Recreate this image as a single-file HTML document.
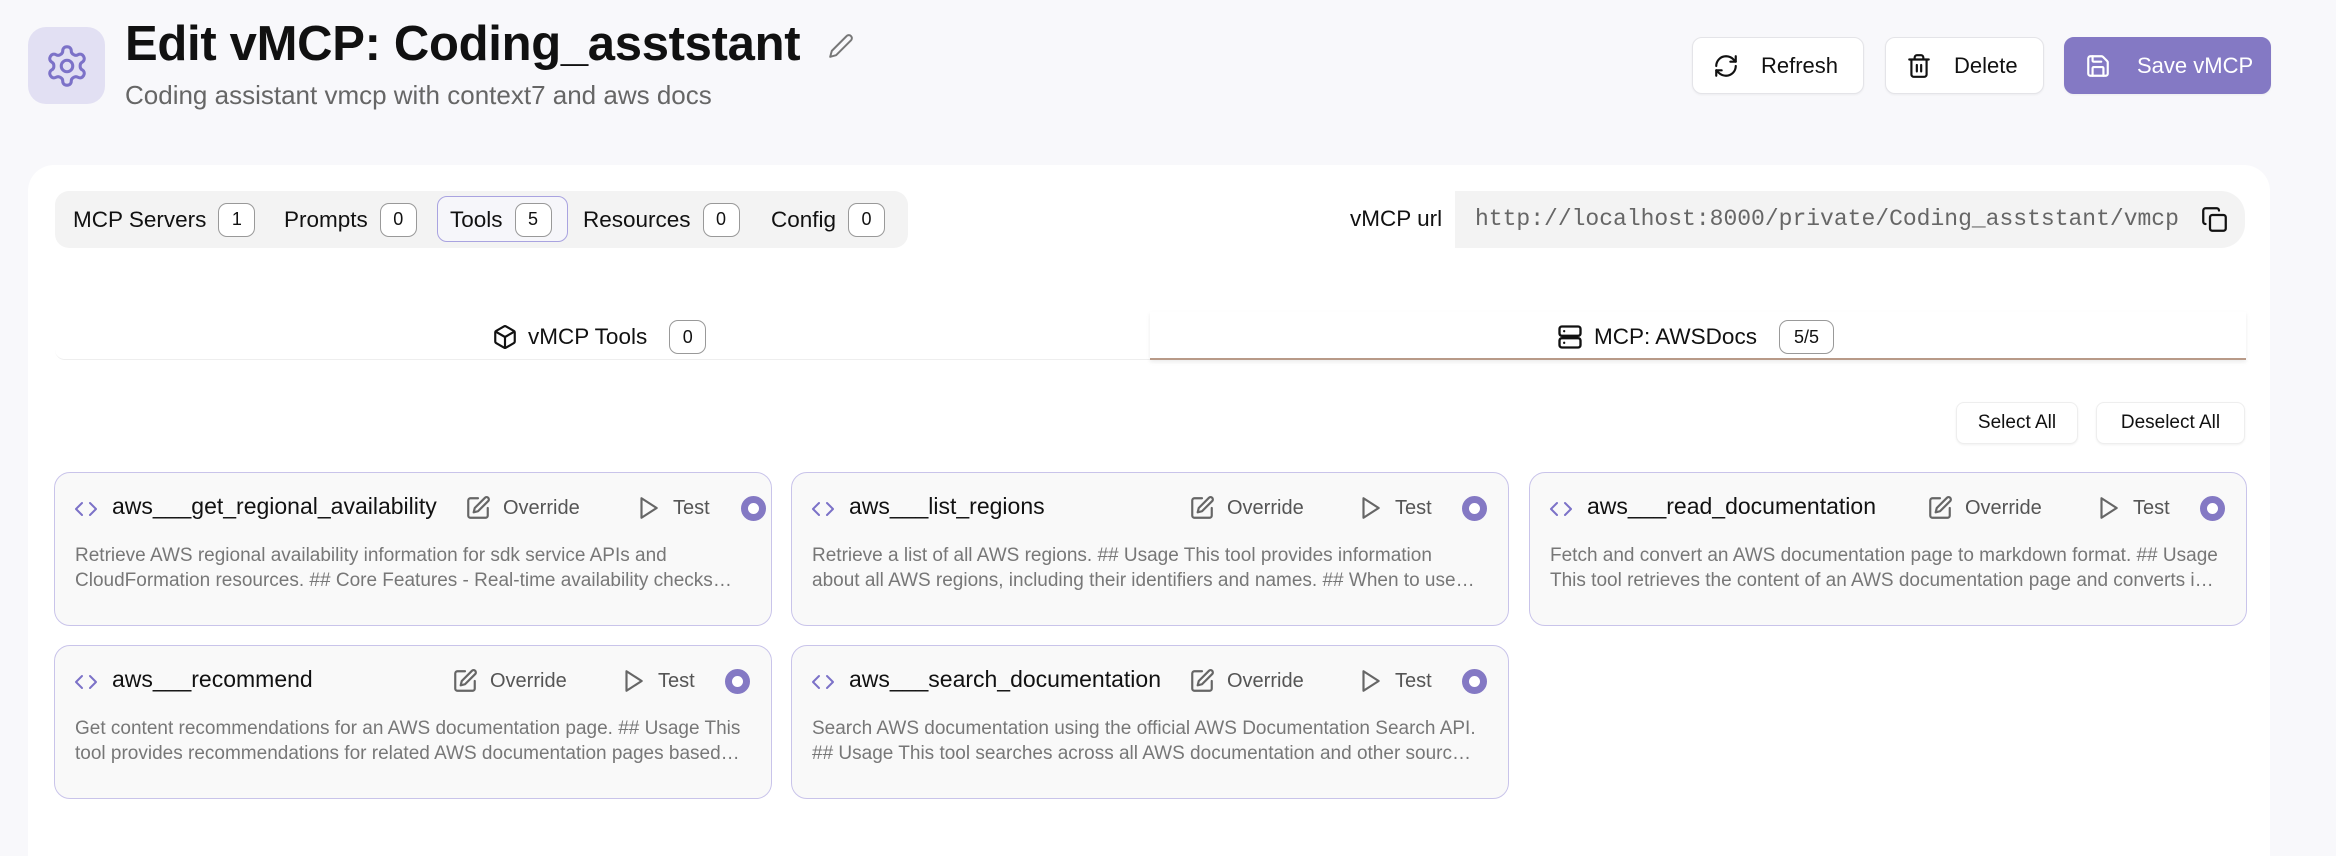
<!DOCTYPE html>
<html><head><meta charset="utf-8">
<style>
*{box-sizing:border-box;margin:0;padding:0}
html,body{width:2336px;height:856px;overflow:hidden}
body{background:#f8f8fb;font-family:"Liberation Sans",sans-serif;color:#111;position:relative}
.abs{position:absolute}
.logo{left:28px;top:27px;width:77px;height:77px;border-radius:18px;background:#e2e0f3;display:flex;align-items:center;justify-content:center}
h1{position:absolute;left:125px;top:16px;font-size:49px;font-weight:bold;letter-spacing:-0.3px}
.sub{left:125px;top:80px;font-size:26px;color:#666}
.btn{position:absolute;top:37px;height:57px;border:1px solid #e4e4e8;border-radius:10px;background:#fff;display:flex;align-items:center;gap:22px;padding-left:20px;font-size:22px;box-shadow:0 1px 2px rgba(0,0,0,.05)}
.main{left:28px;top:165px;width:2242px;height:720px;background:#fff;border-radius:26px}
.tabs{left:55px;top:191px;width:853px;height:57px;background:#f3f3f3;border-radius:14px}
.ti{position:absolute;top:0;height:57px;display:flex;align-items:center;font-size:22.5px}
.bd{display:inline-flex;align-items:center;justify-content:center;height:34px;min-width:37px;padding:0 8px;border:1px solid #999;border-radius:9px;font-size:18px;margin-left:12px;background:#fff}
.url{left:1455px;top:191px;width:790px;height:57px;background:#f3f3f3;border-radius:0 24px 24px 0;font-family:"Liberation Mono",monospace;font-size:23px;color:#666;padding-left:20px;line-height:57px}
.card{position:absolute;width:718px;height:154px;background:#f9f9f9;border:1.5px solid #c9c4ea;border-radius:16px}
.card .nm{position:absolute;left:57px;top:20px;font-size:23px;color:#111}
.card .ci{position:absolute;left:19px;top:24px}
.card .ov,.card .ts{position:absolute;top:22px;display:flex;align-items:center;gap:12px;font-size:20px;color:#555}
.card .rd{position:absolute;top:23px;width:25px;height:25px;border-radius:50%;border:7px solid #8479c4;background:#fff}
.card .ds{position:absolute;left:20px;top:70px;width:668px;font-size:19px;line-height:25px;color:#777;display:-webkit-box;-webkit-line-clamp:2;-webkit-box-orient:vertical;overflow:hidden}
.sb{position:absolute;top:402px;height:42px;background:#fff;border:1px solid #eee;border-radius:8px;font-size:19px;display:flex;align-items:center;justify-content:center;box-shadow:0 1px 2px rgba(0,0,0,.06)}
</style></head><body>
<div class="abs logo"><svg width="46" height="46" viewBox="0 0 24 24" fill="none" stroke="#7c72c8" stroke-width="1.6" stroke-linecap="round" stroke-linejoin="round"><path d="M12.22 2h-.44a2 2 0 0 0-2 2v.18a2 2 0 0 1-1 1.73l-.43.25a2 2 0 0 1-2 0l-.15-.08a2 2 0 0 0-2.730.73l-.22.38a2 2 0 0 0 .73 2.730l.15.1a2 2 0 0 1 1 1.72v.51a2 2 0 0 1-1 1.74l-.15.09a2 2 0 0 0-.73 2.73l.22.38a2 2 0 0 0 2.73.73l.15-.08a2 2 0 0 1 2 0l.43.25a2 2 0 0 1 1 1.73V20a2 2 0 0 0 2 2h.44a2 2 0 0 0 2-2v-.18a2 2 0 0 1 1-1.73l.43-.25a2 2 0 0 1 2 0l.15.08a2 2 0 0 0 2.73-.73l.22-.39a2 2 0 0 0-.73-2.73l-.15-.08a2 2 0 0 1-1-1.74v-.5a2 2 0 0 1 1-1.74l.15-.09a2 2 0 0 0 .73-2.73l-.22-.38a2 2 0 0 0-2.73-.73l-.15.08a2 2 0 0 1-2 0l-.43-.25a2 2 0 0 1-1-1.73V4a2 2 0 0 0-2-2z"/><circle cx="12" cy="12" r="3"/></svg></div>
<h1>Edit vMCP: Coding_asststant</h1>
<svg class="abs" style="left:828px;top:33px" width="26" height="26" viewBox="0 0 24 24" fill="none" stroke="#777" stroke-width="1.8" stroke-linecap="round" stroke-linejoin="round"><path d="M17 3a2.85 2.83 0 1 1 4 4L7.5 20.5 2 22l1.5-5.5Z"/></svg>
<div class="abs sub">Coding assistant vmcp with context7 and aws docs</div>

<div class="btn" style="left:1692px;width:172px"><svg width="26" height="26" viewBox="0 0 24 24" fill="none" stroke="#111" stroke-width="2" stroke-linecap="round" stroke-linejoin="round"><path d="M3 12a9 9 0 0 1 9-9 9.75 9.75 0 0 1 6.74 2.74L21 8"/><path d="M21 3v5h-5"/><path d="M21 12a9 9 0 0 1-9 9 9.75 9.75 0 0 1-6.74-2.74L3 16"/><path d="M8 16H3v5"/></svg>Refresh</div>
<div class="btn" style="left:1885px;width:159px"><svg width="26" height="26" viewBox="0 0 24 24" fill="none" stroke="#111" stroke-width="2" stroke-linecap="round" stroke-linejoin="round"><path d="M3 6h18M19 6v14c0 1-1 2-2 2H7c-1 0-2-1-2-2V6M8 6V4c0-1 1-2 2-2h4c1 0 2 1 2 2v2M10 11v6M14 11v6"/></svg>Delete</div>
<div class="btn" style="left:2064px;width:207px;background:#8479c4;border-color:#8479c4;color:#fff;gap:26px"><svg width="26" height="26" viewBox="0 0 24 24" fill="none" stroke="#fff" stroke-width="2" stroke-linecap="round" stroke-linejoin="round"><path d="M15.2 3a2 2 0 0 1 1.4.6l3.8 3.8a2 2 0 0 1 .6 1.4V19a2 2 0 0 1-2 2H5a2 2 0 0 1-2-2V5a2 2 0 0 1 2-2z"/><path d="M17 21v-7a1 1 0 0 0-1-1H8a1 1 0 0 0-1 1v7"/><path d="M7 3v4a1 1 0 0 0 1 1h7"/></svg>Save vMCP</div>

<div class="abs main"></div>
<div class="abs tabs">
<div class="ti" style="left:18px">MCP Servers<span class="bd">1</span></div>
<div class="ti" style="left:229px">Prompts<span class="bd">0</span></div>
<div class="abs" style="left:382px;top:5px;width:131px;height:46px;border:1.5px solid #a9a3e0;border-radius:10px;background:#f6f6fa"></div>
<div class="ti" style="left:395px">Tools<span class="bd">5</span></div>
<div class="ti" style="left:528px">Resources<span class="bd">0</span></div>
<div class="ti" style="left:716px">Config<span class="bd">0</span></div>
</div>
<div class="abs" style="left:1350px;top:206px;font-size:22.5px">vMCP url</div>
<div class="abs url">http://localhost:8000/private/Coding_asststant/vmcp</div>
<svg class="abs" style="left:2201px;top:206px" width="27" height="27" viewBox="0 0 24 24" fill="none" stroke="#111" stroke-width="2" stroke-linecap="round" stroke-linejoin="round"><rect x="8" y="8" width="14" height="14" rx="2"/><path d="M4 16c-1.1 0-2-.9-2-2V4c0-1.1.9-2 2-2h10c1.1 0 2 .9 2 2"/></svg>

<div class="abs" style="left:55px;top:312px;width:1095px;height:48px;border-bottom:1.5px solid #eee;border-radius:0 0 0 10px"></div>
<div class="abs" style="left:1150px;top:312px;width:1096px;height:48px;background:#fff;box-shadow:0 2px 4px rgba(0,0,0,.08);border-bottom:2px solid #b89a88"></div>
<div class="abs" style="left:492px;top:320px;display:flex;align-items:center;font-size:22.5px;height:34px"><svg width="26" height="26" viewBox="0 0 24 24" fill="none" stroke="#111" stroke-width="2" stroke-linecap="round" stroke-linejoin="round" style="margin-right:10px"><path d="M21 8a2 2 0 0 0-1-1.73l-7-4a2 2 0 0 0-2 0l-7 4A2 2 0 0 0 3 8v8a2 2 0 0 0 1 1.73l7 4a2 2 0 0 0 2 0l7-4A2 2 0 0 0 21 16Z"/><path d="m3.3 7 8.7 5 8.7-5M12 22V12"/></svg>vMCP Tools<span class="bd" style="margin-left:22px">0</span></div>
<div class="abs" style="left:1556px;top:320px;display:flex;align-items:center;font-size:22.5px;height:34px"><svg width="28" height="28" viewBox="0 0 24 24" fill="none" stroke="#111" stroke-width="2" stroke-linecap="round" stroke-linejoin="round" style="margin-right:10px"><rect x="3" y="3" width="18" height="8" rx="2"/><rect x="3" y="13" width="18" height="8" rx="2"/><path d="M7 7h.01M7 17h.01"/></svg>MCP: AWSDocs<span class="bd" style="margin-left:22px;min-width:55px">5/5</span></div>

<div class="sb" style="left:1956px;width:122px">Select All</div>
<div class="sb" style="left:2096px;width:149px">Deselect All</div>

<div class="card" style="left:54px;top:472px">
<svg class="ci" width="24" height="24" viewBox="0 0 24 24" fill="none" stroke="#7c72c8" stroke-width="2" stroke-linecap="round" stroke-linejoin="round"><path d="m16 18 6-6-6-6M8 6l-6 6 6 6"/></svg>
<div class="nm">aws___get_regional_availability</div>
<div class="ov" style="left:410px"><svg width="26" height="26" viewBox="0 0 24 24" fill="none" stroke="#666" stroke-width="2" stroke-linecap="round" stroke-linejoin="round"><path d="M12 3H5a2 2 0 0 0-2 2v14a2 2 0 0 0 2 2h14a2 2 0 0 0 2-2v-7"/><path d="M18.4 2.6a2.1 2.1 0 1 1 3 3L12 15l-4 1 1-4Z"/></svg>Override</div>
<div class="ts" style="left:580px"><svg width="26" height="26" viewBox="0 0 24 24" fill="none" stroke="#666" stroke-width="2" stroke-linejoin="round"><path d="M6 3l14 9-14 9z"/></svg>Test</div>
<div class="rd" style="left:686px"></div>
<div class="ds">Retrieve AWS regional availability information for sdk service APIs and CloudFormation resources. ## Core Features - Real-time availability checks across regions and more details</div>
</div>

<div class="card" style="left:791px;top:472px">
<svg class="ci" width="24" height="24" viewBox="0 0 24 24" fill="none" stroke="#7c72c8" stroke-width="2" stroke-linecap="round" stroke-linejoin="round"><path d="m16 18 6-6-6-6M8 6l-6 6 6 6"/></svg>
<div class="nm">aws___list_regions</div>
<div class="ov" style="left:397px"><svg width="26" height="26" viewBox="0 0 24 24" fill="none" stroke="#666" stroke-width="2" stroke-linecap="round" stroke-linejoin="round"><path d="M12 3H5a2 2 0 0 0-2 2v14a2 2 0 0 0 2 2h14a2 2 0 0 0 2-2v-7"/><path d="M18.4 2.6a2.1 2.1 0 1 1 3 3L12 15l-4 1 1-4Z"/></svg>Override</div>
<div class="ts" style="left:565px"><svg width="26" height="26" viewBox="0 0 24 24" fill="none" stroke="#666" stroke-width="2" stroke-linejoin="round"><path d="M6 3l14 9-14 9z"/></svg>Test</div>
<div class="rd" style="left:670px"></div>
<div class="ds">Retrieve a list of all AWS regions. ## Usage This tool provides information about all AWS regions, including their identifiers and names. ## When to use this tool and more</div>
</div>

<div class="card" style="left:1529px;top:472px">
<svg class="ci" width="24" height="24" viewBox="0 0 24 24" fill="none" stroke="#7c72c8" stroke-width="2" stroke-linecap="round" stroke-linejoin="round"><path d="m16 18 6-6-6-6M8 6l-6 6 6 6"/></svg>
<div class="nm">aws___read_documentation</div>
<div class="ov" style="left:397px"><svg width="26" height="26" viewBox="0 0 24 24" fill="none" stroke="#666" stroke-width="2" stroke-linecap="round" stroke-linejoin="round"><path d="M12 3H5a2 2 0 0 0-2 2v14a2 2 0 0 0 2 2h14a2 2 0 0 0 2-2v-7"/><path d="M18.4 2.6a2.1 2.1 0 1 1 3 3L12 15l-4 1 1-4Z"/></svg>Override</div>
<div class="ts" style="left:565px"><svg width="26" height="26" viewBox="0 0 24 24" fill="none" stroke="#666" stroke-width="2" stroke-linejoin="round"><path d="M6 3l14 9-14 9z"/></svg>Test</div>
<div class="rd" style="left:670px"></div>
<div class="ds">Fetch and convert an AWS documentation page to markdown format. ## Usage This tool retrieves the content of an AWS documentation page and converts it to markdown</div>
</div>

<div class="card" style="left:54px;top:645px">
<svg class="ci" width="24" height="24" viewBox="0 0 24 24" fill="none" stroke="#7c72c8" stroke-width="2" stroke-linecap="round" stroke-linejoin="round"><path d="m16 18 6-6-6-6M8 6l-6 6 6 6"/></svg>
<div class="nm">aws___recommend</div>
<div class="ov" style="left:397px"><svg width="26" height="26" viewBox="0 0 24 24" fill="none" stroke="#666" stroke-width="2" stroke-linecap="round" stroke-linejoin="round"><path d="M12 3H5a2 2 0 0 0-2 2v14a2 2 0 0 0 2 2h14a2 2 0 0 0 2-2v-7"/><path d="M18.4 2.6a2.1 2.1 0 1 1 3 3L12 15l-4 1 1-4Z"/></svg>Override</div>
<div class="ts" style="left:565px"><svg width="26" height="26" viewBox="0 0 24 24" fill="none" stroke="#666" stroke-width="2" stroke-linejoin="round"><path d="M6 3l14 9-14 9z"/></svg>Test</div>
<div class="rd" style="left:670px"></div>
<div class="ds">Get content recommendations for an AWS documentation page. ## Usage This tool provides recommendations for related AWS documentation pages based on content</div>
</div>

<div class="card" style="left:791px;top:645px">
<svg class="ci" width="24" height="24" viewBox="0 0 24 24" fill="none" stroke="#7c72c8" stroke-width="2" stroke-linecap="round" stroke-linejoin="round"><path d="m16 18 6-6-6-6M8 6l-6 6 6 6"/></svg>
<div class="nm">aws___search_documentation</div>
<div class="ov" style="left:397px"><svg width="26" height="26" viewBox="0 0 24 24" fill="none" stroke="#666" stroke-width="2" stroke-linecap="round" stroke-linejoin="round"><path d="M12 3H5a2 2 0 0 0-2 2v14a2 2 0 0 0 2 2h14a2 2 0 0 0 2-2v-7"/><path d="M18.4 2.6a2.1 2.1 0 1 1 3 3L12 15l-4 1 1-4Z"/></svg>Override</div>
<div class="ts" style="left:565px"><svg width="26" height="26" viewBox="0 0 24 24" fill="none" stroke="#666" stroke-width="2" stroke-linejoin="round"><path d="M6 3l14 9-14 9z"/></svg>Test</div>
<div class="rd" style="left:670px"></div>
<div class="ds">Search AWS documentation using the official AWS Documentation Search API. ## Usage This tool searches across all AWS documentation and other sources for results</div>
</div>
</body></html>
